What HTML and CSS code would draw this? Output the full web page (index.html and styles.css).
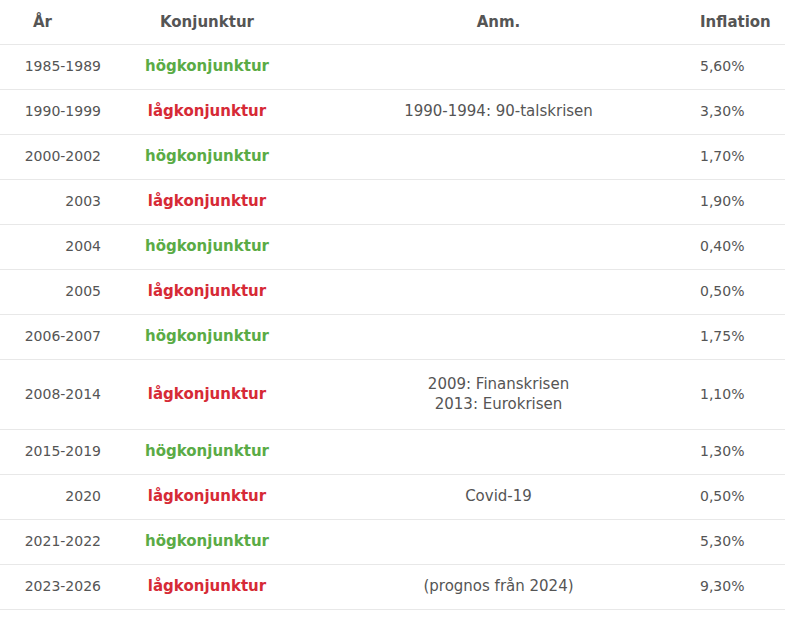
FILE: index.html
```html
<!DOCTYPE html>
<html lang="sv">
<head>
<meta charset="utf-8">
<link rel="stylesheet" href="styles.css">
</head>
<body>
<table class="tbl">
  <thead>
    <tr><th class="c-year">År</th><th class="c-kon">Konjunktur</th><th class="c-anm">Anm.</th><th class="c-inf">Inflation</th></tr>
  </thead>
  <tbody>
    <tr><td class="c-year">1985-1989</td><td class="c-kon hog">högkonjunktur</td><td class="c-anm"></td><td class="c-inf">5,60%</td></tr>
    <tr><td class="c-year">1990-1999</td><td class="c-kon lag">lågkonjunktur</td><td class="c-anm">1990-1994: 90-talskrisen</td><td class="c-inf">3,30%</td></tr>
    <tr><td class="c-year">2000-2002</td><td class="c-kon hog">högkonjunktur</td><td class="c-anm"></td><td class="c-inf">1,70%</td></tr>
    <tr><td class="c-year">2003</td><td class="c-kon lag">lågkonjunktur</td><td class="c-anm"></td><td class="c-inf">1,90%</td></tr>
    <tr><td class="c-year">2004</td><td class="c-kon hog">högkonjunktur</td><td class="c-anm"></td><td class="c-inf">0,40%</td></tr>
    <tr><td class="c-year">2005</td><td class="c-kon lag">lågkonjunktur</td><td class="c-anm"></td><td class="c-inf">0,50%</td></tr>
    <tr><td class="c-year">2006-2007</td><td class="c-kon hog">högkonjunktur</td><td class="c-anm"></td><td class="c-inf">1,75%</td></tr>
    <tr><td class="c-year">2008-2014</td><td class="c-kon lag">lågkonjunktur</td><td class="c-anm multi">2009: Finanskrisen<br>2013: Eurokrisen</td><td class="c-inf">1,10%</td></tr>
    <tr><td class="c-year">2015-2019</td><td class="c-kon hog">högkonjunktur</td><td class="c-anm"></td><td class="c-inf">1,30%</td></tr>
    <tr><td class="c-year">2020</td><td class="c-kon lag">lågkonjunktur</td><td class="c-anm">Covid-19</td><td class="c-inf">0,50%</td></tr>
    <tr><td class="c-year">2021-2022</td><td class="c-kon hog">högkonjunktur</td><td class="c-anm"></td><td class="c-inf">5,30%</td></tr>
    <tr><td class="c-year">2023-2026</td><td class="c-kon lag">lågkonjunktur</td><td class="c-anm">(prognos från 2024)</td><td class="c-inf">9,30%</td></tr>
  </tbody>
</table>
</body>
</html>
```
FILE: styles.css
```css
html, body { margin: 0; padding: 0; background: #fff; }
body { font-family: "DejaVu Sans", sans-serif; color: #555; font-size: 14px; }
.tbl { width: 785px; border-collapse: collapse; table-layout: fixed; }
.tbl th, .tbl td { box-sizing: border-box; border-bottom: 1px solid #e8e8e8; padding: 11px 0 13px; line-height: 20px; font-weight: normal; }
.tbl th { font-weight: bold; font-size: 15px; color: #555; padding: 12px 0; }
.tbl .c-year { width: 117px; }
.tbl .c-kon { width: 180px; text-align: center; }
.tbl .c-anm { width: 403px; text-align: center; }
.tbl .c-inf { width: 85px; text-align: left; }
.tbl td.c-year { text-align: right; padding-right: 16px; }
.tbl th.c-year { text-align: left; padding-left: 33px; }
.tbl td.c-anm { font-size: 15px; }
.tbl td.multi { padding: 14px 0 15px; }
.tbl td.hog { color: #5aab46; font-weight: bold; font-size: 15px; }
.tbl td.lag { color: #d62a36; font-weight: bold; font-size: 15px; }
```
